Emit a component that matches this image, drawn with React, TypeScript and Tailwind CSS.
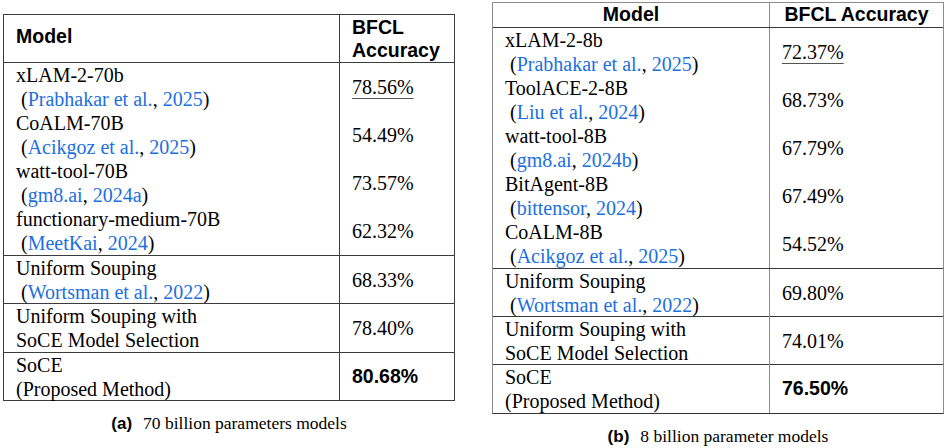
import React from "react";

type Cite = [string, string];

type Entry = {
  lines: string[];
  cite?: Cite;
  acc: string;
  underline?: boolean;
  bold?: boolean;
};

const serif = "font-['Liberation_Serif',serif]";
const sans = "font-['Liberation_Sans',Arial,sans-serif]";
const blue = "text-[#1c6fe0]";

// left table (a)
const groupA: Entry[][] = [
  [
    { lines: ["xLAM-2-70b"], cite: ["Prabhakar et al.", "2025"], acc: "78.56%", underline: true },
    { lines: ["CoALM-70B"], cite: ["Acikgoz et al.", "2025"], acc: "54.49%" },
    { lines: ["watt-tool-70B"], cite: ["gm8.ai", "2024a"], acc: "73.57%" },
    { lines: ["functionary-medium-70B"], cite: ["MeetKai", "2024"], acc: "62.32%" },
  ],
  [{ lines: ["Uniform Souping"], cite: ["Wortsman et al.", "2022"], acc: "68.33%" }],
  [{ lines: ["Uniform Souping with", "SoCE Model Selection"], acc: "78.40%" }],
  [{ lines: ["SoCE", "(Proposed Method)"], acc: "80.68%", bold: true }],
];

// right table (b)
const groupB: Entry[][] = [
  [
    { lines: ["xLAM-2-8b"], cite: ["Prabhakar et al.", "2025"], acc: "72.37%", underline: true },
    { lines: ["ToolACE-2-8B"], cite: ["Liu et al.", "2024"], acc: "68.73%" },
    { lines: ["watt-tool-8B"], cite: ["gm8.ai", "2024b"], acc: "67.79%" },
    { lines: ["BitAgent-8B"], cite: ["bittensor", "2024"], acc: "67.49%" },
    { lines: ["CoALM-8B"], cite: ["Acikgoz et al.", "2025"], acc: "54.52%" },
  ],
  [{ lines: ["Uniform Souping"], cite: ["Wortsman et al.", "2022"], acc: "69.80%" }],
  [{ lines: ["Uniform Souping with", "SoCE Model Selection"], acc: "74.01%" }],
  [{ lines: ["SoCE", "(Proposed Method)"], acc: "76.50%", bold: true }],
];

function ModelName({ entry }: { entry: Entry }) {
  return (
    <div className={`${serif} text-[20px] leading-[24px] text-black`}>
      {entry.lines.map((l) => (
        <div key={l}>{l}</div>
      ))}
      {entry.cite && (
        <div className="pl-[5px]">
          (<span className={blue}>{entry.cite[0]}</span>, <span className={blue}>{entry.cite[1]}</span>)
        </div>
      )}
    </div>
  );
}

function Accuracy({ entry }: { entry: Entry }) {
  if (entry.bold) {
    return <span className={`${sans} text-[19.5px] font-bold text-black`}>{entry.acc}</span>;
  }
  return (
    <span
      className={`${serif} text-[20px] text-black ${
        entry.underline ? "underline decoration-1 underline-offset-[4px] decoration-[#555]" : ""
      }`}
    >
      {entry.acc}
    </span>
  );
}

function LeftTable() {
  const heights = ["h-[192px]", "h-[47px]", "h-[48px]", "h-[47px]"];
  return (
    <div className="w-[452px] border border-[#3c3c3c]">
      <div className="flex h-[48px] border-b border-[#3c3c3c]">
        <div className={`${sans} w-[336px] border-r border-[#3c3c3c] pl-[12px] flex items-center pb-[3px] text-[19.5px] font-bold`}>
          Model
        </div>
        <div className={`${sans} flex-1 pl-[12px] pt-[1px] text-[19.5px] font-bold leading-[23px]`}>
          BFCL
          <br />
          Accuracy
        </div>
      </div>
      {groupA.map((g, gi) => (
        <div
          key={gi}
          className={`flex flex-col ${heights[gi]} ${gi < groupA.length - 1 ? "border-b border-[#3c3c3c] box-content" : ""}`}
        >
          {g.map((e) => (
            <div key={e.acc} className="flex flex-1">
              <div className="w-[336px] border-r border-[#3c3c3c] pl-[12px] flex items-center">
                <ModelName entry={e} />
              </div>
              <div className="flex-1 pl-[12px] flex items-center">
                <Accuracy entry={e} />
              </div>
            </div>
          ))}
        </div>
      ))}
    </div>
  );
}

function RightTable() {
  const heights = ["h-[240px]", "h-[47px]", "h-[47px]", "h-[48px]"];
  return (
    <div className="w-[452px] border border-[#8c8c8c] border-b-[#333]">
      <div className="flex h-[25px] border-b border-[#3a3a3a]">
        <div className={`${sans} w-[277px] border-r border-[#8c8c8c] flex items-center justify-center text-[19.5px] font-bold`}>
          Model
        </div>
        <div className={`${sans} flex-1 flex items-center justify-center text-[19.5px] font-bold`}>
          BFCL Accuracy
        </div>
      </div>
      {groupB.map((g, gi) => (
        <div
          key={gi}
          className={`flex flex-col ${heights[gi]} ${gi < groupB.length - 1 ? "border-b border-[#3a3a3a] box-content" : ""}`}
        >
          {g.map((e) => (
            <div key={e.acc} className="flex flex-1">
              <div className="w-[277px] border-r border-[#8c8c8c] pl-[12px] flex items-center">
                <ModelName entry={e} />
              </div>
              <div className="flex-1 pl-[12px] flex items-center">
                <Accuracy entry={e} />
              </div>
            </div>
          ))}
        </div>
      ))}
    </div>
  );
}

function Caption({ tag, text }: { tag: string; text: string }) {
  return (
    <div className="flex justify-center items-baseline mt-[11px] leading-[22px]">
      <span className={`${sans} text-[17px] font-bold text-black`}>({tag})</span>
      <span className={`${serif} text-[17.5px] text-black ml-[11px]`}>{text}</span>
    </div>
  );
}

export default function App() {
  return (
    <div className="w-[949px] h-[448px] bg-white flex items-start overflow-hidden">
      <div className="ml-[3px] mt-[14px]">
        <LeftTable />
        <Caption tag="a" text="70 billion parameters models" />
      </div>
      <div className="ml-[37px] mt-[2px]">
        <RightTable />
        <Caption tag="b" text="8 billion parameter models" />
      </div>
    </div>
  );
}
